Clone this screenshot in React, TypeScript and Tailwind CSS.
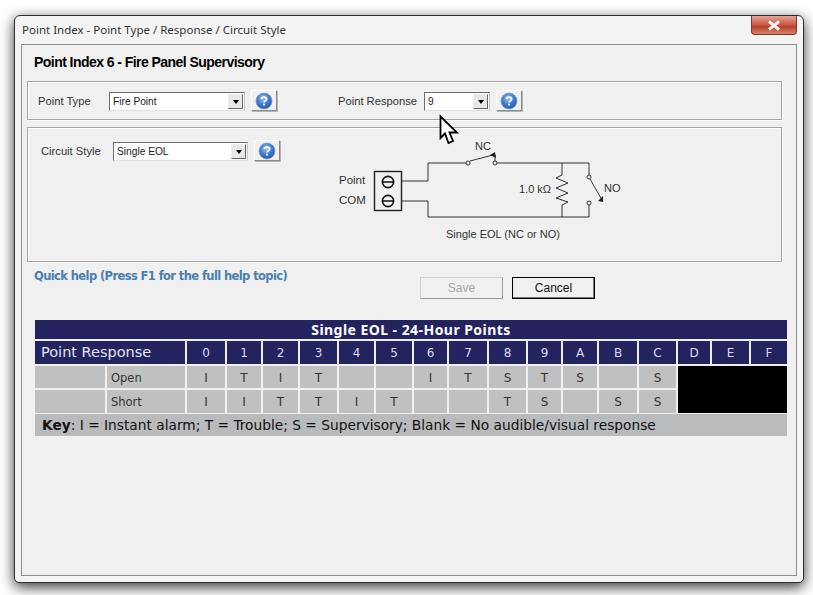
const uiFont = "font-['Liberation_Sans',Arial,sans-serif]";

const headers = ["0", "1", "2", "3", "4", "5", "6", "7", "8", "9", "A", "B", "C", "D", "E", "F"];
const openRow = ["I", "T", "I", "T", "", "", "I", "T", "S", "T", "S", "", "S"];
const shortRow = ["I", "I", "T", "T", "I", "T", "", "", "T", "S", "", "S", "S"];

function HelpButton() {
  return (
    <button
      type="button"
      className="flex h-[21px] w-[26px] items-center justify-center border border-t-white border-l-white border-r-[#8a8a8a] border-b-[#8a8a8a] bg-[#f0f0f0] shadow-[1px_1px_0_#b5b5b5]"
    >
      <svg width="18" height="18" viewBox="0 0 18 18">
        <defs>
          <radialGradient id="helpBall" cx="45%" cy="35%" r="65%">
            <stop offset="0%" stopColor="#9cc4f2" />
            <stop offset="60%" stopColor="#3d78cf" />
            <stop offset="100%" stopColor="#2a58a8" />
          </radialGradient>
        </defs>
        <circle cx="9" cy="9" r="8" fill="url(#helpBall)" stroke="#7f9fca" strokeWidth="0.7" />
        <path d="M6.4 7 C6.5 4.6 11.6 4.5 11.6 7.1 C11.6 8.9 9 8.8 9 10.6" fill="none" stroke="#fff" strokeWidth="1.7" />
        <rect x="8.1" y="11.7" width="1.8" height="1.8" fill="#fff" />
      </svg>
    </button>
  );
}

function Combo({ value, width }: { value: string; width: string }) {
  return (
    <div className={`flex h-[19px] items-center justify-between border border-t-[#6f6f6f] border-l-[#6f6f6f] border-r-[#c8c8c8] border-b-[#e0e0e0] bg-white pl-[3px] pr-px text-[10.2px] text-[#222] ${width}`}>
      <span>{value}</span>
      <span className="flex h-[15px] w-[15px] items-center justify-center border border-t-[#eee] border-l-[#eee] border-r-[#666] border-b-[#666] bg-[#e8e8e8]">
        <span className="h-0 w-0 border-x-[3.5px] border-t-[4px] border-x-transparent border-t-black" />
      </span>
    </div>
  );
}

function Group({ className, children }: { className: string; children: React.ReactNode }) {
  return (
    <div className={`ml-[5px] w-[755px] border border-[#a4a4a4] shadow-[inset_1px_1px_0_#fff,1px_1px_0_#fff] ${className}`}>
      {children}
    </div>
  );
}

function Diagram() {
  return (
    <svg width="300" height="110" viewBox="330 135 300 110" className="ml-[50px] shrink-0 font-['Liberation_Sans',Arial,sans-serif]">
      <g fill="none" stroke="#333" strokeWidth="1">
        <path d="M402 181 H428 V163 H466" />
        <path d="M497 163 H589 V175" />
        <path d="M402 201 H428 V217 H589 V205" />
        <path d="M562 163 V175 L556 178 L568 183 L556 188 L568 193 L556 198 L568 202 L562 205 V217" />
        <path d="M470 161 L493 155 M495 155 V161" />
        <path d="M590 179 L602 200" />
        <circle cx="468" cy="163" r="2" fill="#f0f0f0" />
        <circle cx="495" cy="163" r="2" fill="#f0f0f0" />
        <circle cx="589" cy="177" r="2" fill="#f0f0f0" />
        <circle cx="589" cy="203" r="2" fill="#f0f0f0" />
      </g>
      <path d="M490 155 L495 152 L496 158 Z" fill="#222" />
      <path d="M598 201 L603 196 L603 202 Z" fill="#222" />
      <rect x="374.5" y="171.5" width="27" height="39" fill="#f0f0f0" stroke="#222" strokeWidth="1.4" />
      <g fill="none" stroke="#111" strokeWidth="1.6">
        <circle cx="388" cy="182" r="5.6" />
        <circle cx="388" cy="201" r="5.6" />
        <path d="M382.5 182 H393.5 M382.5 201 H393.5" />
      </g>
      <g fill="#333" fontSize="11">
        <text x="339" y="184" fontSize="11.5">Point</text>
        <text x="339" y="204" fontSize="11.5">COM</text>
        <text x="475" y="150">NC</text>
        <text x="519" y="193">1.0 kΩ</text>
        <text x="604" y="192">NO</text>
        <text x="446" y="238">Single EOL (NC or NO)</text>
      </g>
    </svg>
  );
}

function Cell({ children }: { children?: React.ReactNode }) {
  return <div className="flex items-center justify-center bg-[#bfc0c0] pt-px text-[12px] text-[#333]">{children}</div>;
}

function Head({ children }: { children: React.ReactNode }) {
  return <div className="flex items-center justify-center bg-[#23235f] text-[12px] text-[#dcdcea]">{children}</div>;
}

export default function App() {
  return (
    <div className={`h-[595px] w-[813px] overflow-hidden bg-white pl-[14px] pt-[15px] ${uiFont}`}>
      <div className="h-[568px] w-[790px] rounded-t-[6px] rounded-b-[5px] border border-[#2e2e2e] bg-[#f4f4f4] px-[6px] shadow-[0_4px_14px_rgba(0,0,0,0.8)]">
        <div className="flex h-[28px] items-start justify-between">
          <span className="mt-[5px] pl-px font-['Noto_Sans',sans-serif] text-[11.5px] text-[#333]">
            Point Index - Point Type / Response / Circuit Style
          </span>
          <div className="flex h-[19px] w-[46px] items-center justify-center rounded-b-[4px] border border-t-0 border-[#7b3a30] bg-[linear-gradient(#e6a596,#c9543e_50%,#b5402c_60%,#d6836f)]">
            <svg width="14" height="11" viewBox="0 0 14 11">
              <path d="M2 1.5 L12 9.5 M12 1.5 L2 9.5" stroke="#f4f0ee" strokeWidth="3" />
            </svg>
          </div>
        </div>

        <div className="h-[532px] w-[776px] border border-[#8e8e8e] bg-[#f0f0f0] pt-[8px]">
          <h1 className="pl-[12px] text-[14px] font-bold leading-[18px] tracking-[-0.55px] text-black">
            Point Index 6 - Fire Panel Supervisory
          </h1>

          <Group className="mt-[10px] flex h-[39px] items-center pl-[10px] text-[11.2px] text-[#333]">
            <span className="w-[71px] pt-px">Point Type</span>
            <div className="mt-[2px]"><Combo value="Fire Point" width="w-[136px]" /></div>
            <div className="ml-[6px]"><HelpButton /></div>
            <span className="ml-[61px] w-[86px] pt-px">Point Response</span>
            <div className="mt-[2px]"><Combo value="9" width="w-[66px]" /></div>
            <div className="ml-[6px]"><HelpButton /></div>
          </Group>

          <Group className="mt-[7px] flex h-[135px] items-start pl-[13px] pt-[7px] text-[11.2px] text-[#333]">
            <div className="mt-[5px] flex items-center">
              <span className="w-[72px] pt-px">Circuit Style</span>
              <div className="mt-[2px]"><Combo value="Single EOL" width="w-[135px]" /></div>
              <div className="ml-[6px]"><HelpButton /></div>
            </div>
            <Diagram />
          </Group>

          <div className="flex h-[58px] items-start">
            <span className="ml-[12px] mt-[6px] w-[386px] font-['DejaVu_Sans',sans-serif] text-[11.5px] font-bold tracking-[-0.6px] text-[#4a7fae]">
              Quick help (Press F1 for the full help topic)
            </span>
            <button
              type="button"
              className="mt-[15px] h-[22px] w-[83px] border border-[#d0d0d0] border-r-[#9a9a9a] border-b-[#9a9a9a] bg-[#f0f0f0] text-[12px] text-[#a8a8a8]"
            >
              Save
            </button>
            <button
              type="button"
              className="ml-[9px] mt-[15px] h-[22px] w-[83px] border border-black bg-[#f0f0f0] text-[12px] text-[#111] shadow-[inset_-1px_-1px_0_#777]"
            >
              Cancel
            </button>
          </div>

          <div className="ml-[13px] w-[752px] font-['DejaVu_Sans',sans-serif]">
            <div className="grid grid-cols-[70px_78px_38px_34px_35px_37px_35px_36px_33px_38px_37px_33px_34px_38px_37px_32px_37px_36px] grid-rows-[19px_23px_22px_23px] gap-[2px]">
              <div className="col-span-full flex items-center justify-center bg-[#23235f] font-['Noto_Sans',sans-serif] text-[14px] font-bold tracking-[0.45px] text-white">
                Single EOL - 24-Hour Points
              </div>
              <div className="col-span-2 flex items-center bg-[#23235f] pl-[6px] text-[14.5px] text-[#e4e4ee]">
                Point Response
              </div>
              {headers.map((h) => (
                <Head key={h}>{h}</Head>
              ))}
              <div className="bg-[#bfc0c0]" />
              <div className="flex items-center bg-[#bfc0c0] pl-[4px] pt-[3px] text-[11.5px] text-[#333]">Open</div>
              {openRow.map((v, i) => (
                <Cell key={i}>{v}</Cell>
              ))}
              <div className="col-span-3 row-span-2 bg-black" />
              <div className="bg-[#bfc0c0]" />
              <div className="flex items-center bg-[#bfc0c0] pl-[4px] pt-[3px] text-[11.5px] text-[#333]">Short</div>
              {shortRow.map((v, i) => (
                <Cell key={i}>{v}</Cell>
              ))}
            </div>
            <div className="mt-px flex h-[22px] items-center bg-[#b9babc] pl-[7px] text-[13.75px] text-[#111]">
              <b>Key</b>: I = Instant alarm; T = Trouble; S = Supervisory; Blank = No audible/visual response
            </div>
          </div>
        </div>
      </div>

      <svg className="absolute left-[438px] top-[114px]" width="22" height="34" viewBox="0 0 22 34">
        <path d="M2.5 2.5 V24 L7 19.5 L10.5 29 L15 27 L11.5 18.5 L19 18.5 Z" fill="#fff" stroke="#000" strokeWidth="1.8" strokeLinejoin="miter" />
      </svg>
    </div>
  );
}
